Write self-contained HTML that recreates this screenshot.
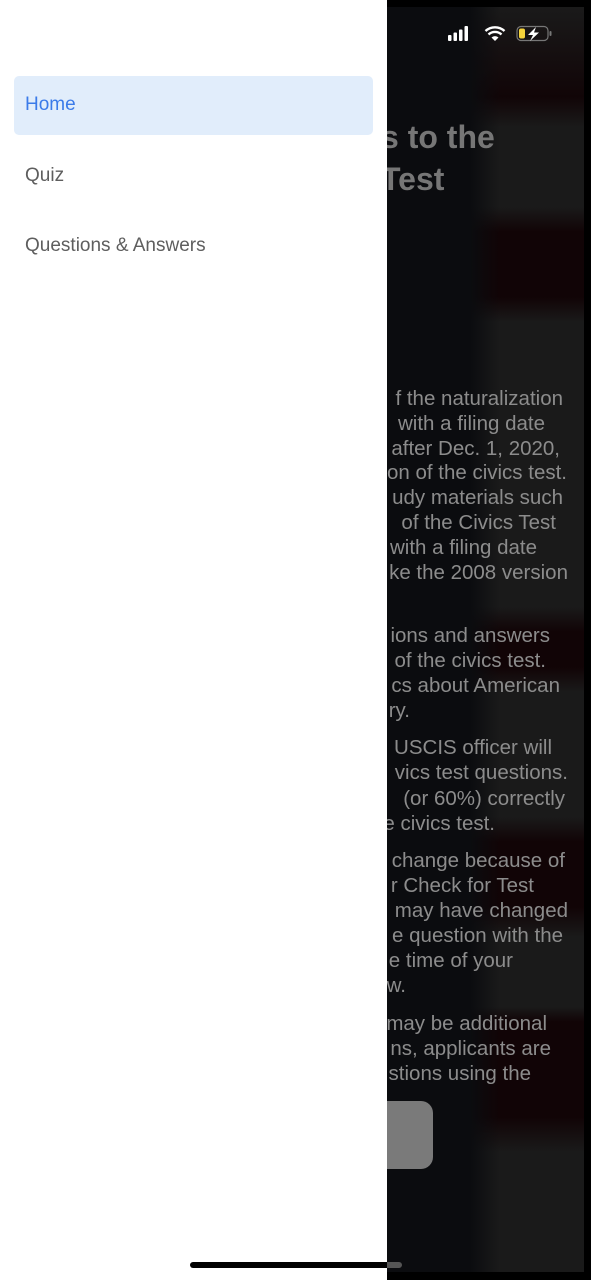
<!DOCTYPE html>
<html><head><meta charset="utf-8"><style>
*{margin:0;padding:0;box-sizing:border-box}
body{width:591px;height:1280px;background:#000;position:relative;overflow:hidden;font-family:"Liberation Sans",sans-serif}
#bg{position:absolute;left:0;top:7px;width:584px;height:1265px;
background:linear-gradient(90deg,#0b0c0f 0,#0b0c0f 470px,rgba(0,0,0,0) 500px),
linear-gradient(180deg,#1a1a1a 0,#110507 90px,#1a1a1a 120px,#1a1a1a 200px,#110406 225px,#110406 290px,#1a1a1a 315px,#1a1a1a 600px,#110406 625px,#110406 660px,#1a1a1a 685px,#1a1a1a 810px,#110406 835px,#110406 900px,#1a1a1a 930px,#1a1a1a 1000px,#110406 1015px,#110406 1110px,#1a1a1a 1145px);}
.t{position:absolute;white-space:nowrap;color:#8c8c8c;font-size:20.5px;line-height:25px}
.h{position:absolute;white-space:nowrap;color:#767676;font-size:32px;font-weight:bold;left:381px}
#drawer{position:absolute;left:0;top:0;width:387px;height:1280px;background:#fff;z-index:5}
.sel{position:absolute;left:14px;top:76px;width:359px;height:59px;background:#e1edfb;border-radius:5px}
.m{position:absolute;left:25px;font-size:19px;color:#5e5e5e}
</style></head><body>
<div id="bg"></div>
<div class="h" style="top:119px">s to the</div>
<div class="h" style="top:161px">Test</div>
<div class="t" style="right:28px;top:386px">f the naturalization</div>
<div class="t" style="right:46px;top:411px">with a filing date</div>
<div class="t" style="right:31px;top:436px">after Dec. 1, 2020,</div>
<div class="t" style="right:24px;top:460px">on of the civics test.</div>
<div class="t" style="right:28px;top:485px">udy materials such</div>
<div class="t" style="right:35px;top:510px">of the Civics Test</div>
<div class="t" style="right:54px;top:535px">with a filing date</div>
<div class="t" style="right:23px;top:560px">ke the 2008 version</div>
<div class="t" style="right:41px;top:623px">ions and answers</div>
<div class="t" style="right:45px;top:648px">of the civics test.</div>
<div class="t" style="right:31px;top:673px">cs about American</div>
<div class="t" style="right:181px;top:698px">ry.</div>
<div class="t" style="right:39px;top:735px">USCIS officer will</div>
<div class="t" style="right:23px;top:760px">vics test questions.</div>
<div class="t" style="right:26px;top:786px">(or 60%) correctly</div>
<div class="t" style="right:96px;top:811px">e civics test.</div>
<div class="t" style="right:26px;top:848px">change because of</div>
<div class="t" style="right:57px;top:873px">r Check for Test</div>
<div class="t" style="right:23px;top:898px">may have changed</div>
<div class="t" style="right:28px;top:923px">e question with the</div>
<div class="t" style="right:78px;top:948px">e time of your</div>
<div class="t" style="right:185px;top:973px">w.</div>
<div class="t" style="right:44px;top:1011px">may be additional</div>
<div class="t" style="right:40px;top:1036px">ns, applicants are</div>
<div class="t" style="right:60px;top:1061px">stions using the</div>
<div style="position:absolute;left:370px;top:1101px;width:63px;height:68px;background:#7a7a7a;border-radius:12px"></div>
<svg style="position:absolute;left:446px;top:24px" width="110" height="20" viewBox="0 0 110 20">
<rect x="2" y="11" width="3.5" height="6" rx="1" fill="#fff"/>
<rect x="7.5" y="8.5" width="3.5" height="8.5" rx="1" fill="#fff"/>
<rect x="13" y="5.5" width="3.5" height="11.5" rx="1" fill="#fff"/>
<rect x="18.5" y="2" width="3.5" height="15" rx="1" fill="#fff"/>
<path d="M49 17 L45.5 13.5 A5 5 0 0 1 52.5 13.5 Z" fill="#fff"/>
<path d="M42.5 10.5 A9.5 9.5 0 0 1 55.5 10.5" stroke="#fff" stroke-width="2.4" fill="none"/>
<path d="M39.5 7 A14 14 0 0 1 58.5 7" stroke="#fff" stroke-width="2.4" fill="none"/>
<rect x="71" y="2.5" width="31" height="14" rx="4" stroke="#777" stroke-width="1.2" fill="none"/>
<rect x="73" y="4.5" width="6" height="10" rx="2" fill="#f5d33b"/>
<rect x="103.5" y="7" width="2" height="5" rx="1" fill="#777"/>
<path d="M90 3 L82 11 L87 11 L84 17 L93 8.5 L88 8.5 Z" fill="#fff"/>
</svg>
<div style="position:absolute;left:380px;top:1262px;width:22px;height:6px;border-radius:3px;background:#555"></div>
<div id="drawer">
<div class="sel"></div>
<div class="m" style="top:94px;color:#3b7be9">Home</div>
<div class="m" style="top:165px">Quiz</div>
<div class="m" style="top:235px">Questions &amp; Answers</div>
<div style="position:absolute;left:190px;top:1262px;width:197px;height:6px;border-radius:3px 0 0 3px;background:#000"></div>
</div>
</body></html>
